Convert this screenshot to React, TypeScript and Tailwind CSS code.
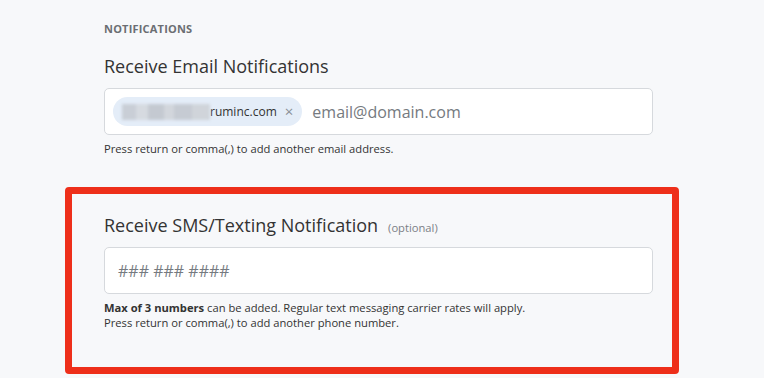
import React from 'react'

const font = { fontFamily: '"Open Sans", "Noto Sans", Arial, sans-serif' }

function EmailChip() {
  return (
    <div className="flex h-[29px] shrink-0 items-center rounded-full bg-[#e4edf8] pl-[9px] pr-[9px]">
      <div className="flex h-[16px] w-[88px] overflow-hidden blur-[1.5px]">
        <div className="h-full w-[14px] bg-[#c9ced6]" />
        <div className="h-full w-[12px] bg-[#d6dae0]" />
        <div className="h-full w-[16px] bg-[#c4c9d1]" />
        <div className="h-full w-[10px] bg-[#d2d6dc]" />
        <div className="h-full w-[18px] bg-[#c6cbd3]" />
        <div className="h-full w-[18px] bg-[#d0d4da]" />
      </div>
      <span className="text-[12px] leading-none text-[#333]">ruminc.com</span>
      <span className="ml-[8px] text-[15px] leading-none text-[#8a8f96]">×</span>
    </div>
  )
}

export default function App() {
  return (
    <div className="h-[378px] w-[764px] overflow-hidden bg-[#f7f8fa] text-[#333]" style={font}>
      <div className="pl-[104px] pt-[21px]">
        <p className="text-[11px] font-bold uppercase leading-[16px] tracking-[0.2px] text-[#6b6e72]">
          Notifications
        </p>
        <h2 className="mt-[17px] text-[18px] leading-[24px] text-[#333]">Receive Email Notifications</h2>
        <div className="mt-[10px] flex h-[47px] w-[549px] items-center gap-[10px] rounded-[5px] border border-[#d6d9dd] bg-white pl-[8px]">
          <EmailChip />
          <span className="text-[16px] text-[#757a80]">email@domain.com</span>
        </div>
        <p className="mt-[6px] text-[11.2px] leading-[15px]">Press return or comma(,) to add another email address.</p>
      </div>

      <div className="ml-[65px] mt-[31px] h-[187px] w-[614px] rounded-[4px] border-[7px] border-[#ee2f1a] pl-[32px] pt-[19px]">
        <div className="flex items-baseline">
          <h2 className="text-[18px] leading-[24px]">Receive SMS/Texting Notification</h2>
          <span className="ml-[10px] text-[11.2px] text-[#7c8086]">(optional)</span>
        </div>
        <div className="mt-[10px] flex h-[47px] w-[549px] items-center rounded-[5px] border border-[#d6d9dd] bg-white pl-[13px]">
          <span className="text-[16px] text-[#757a80]">### ### ####</span>
        </div>
        <div className="mt-[6px] text-[11.2px] leading-[15px]">
          <p>
            <span className="font-bold">Max of 3 numbers</span> can be added. Regular text messaging carrier rates will apply.
          </p>
          <p>Press return or comma(,) to add another phone number.</p>
        </div>
      </div>
    </div>
  )
}
